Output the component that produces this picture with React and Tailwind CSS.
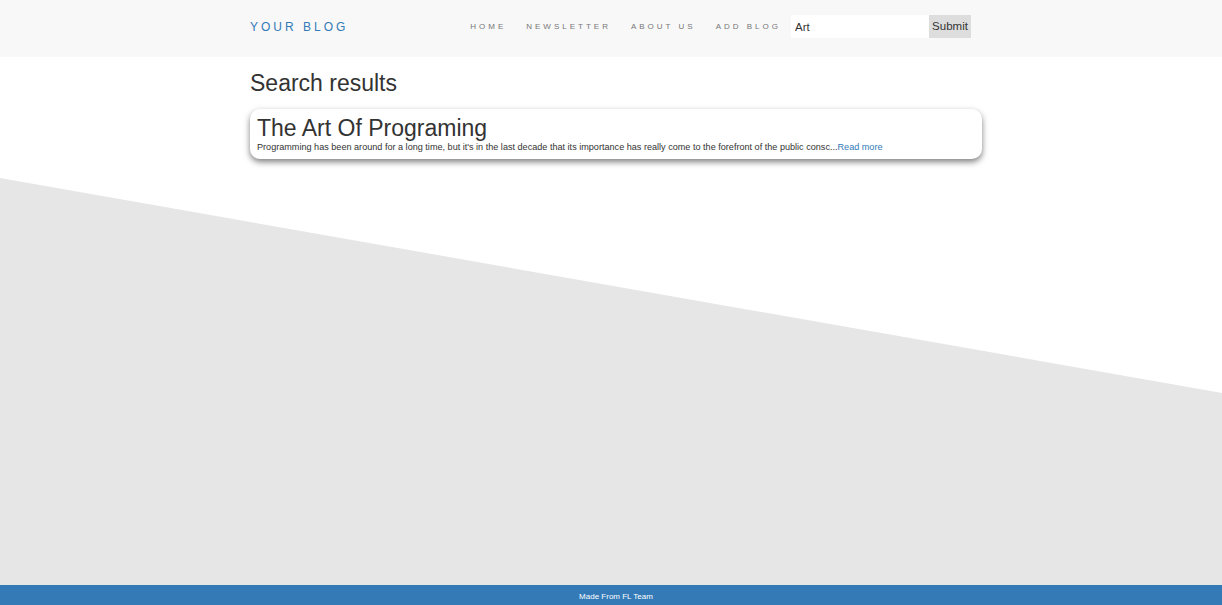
import { useState } from 'react';

const navItems = ['Home', 'Newsletter', 'About us', 'Add blog'];

const results = [
  {
    id: 1,
    title: 'The Art Of Programing',
    excerpt:
      "Programming has been around for a long time, but it's in the last decade that its importance has really come to the forefront of the public consc",
  },
];

export default function App() {
  const [query, setQuery] = useState('Art');

  return (
    <div className="relative min-h-screen flex flex-col bg-white font-['Liberation_Sans',Arial,sans-serif] text-[#333]">
      {/* diagonal backdrop */}
      <div className="absolute inset-0 bg-[#e6e6e6] [clip-path:polygon(0_178px,100%_393px,100%_100%,0_100%)]" />

      <header className="relative w-full bg-[#f8f8f8] h-[57px]">
        <div className="w-[722px] mx-auto h-full flex items-center pb-[4px] pr-[1px]">
          <a href="#" className="text-[12px] tracking-[3px] uppercase text-[#337ab7]">Your Blog</a>
          <nav className="ml-auto flex items-center">
            {navItems.map((item) => (
              <a key={item} href="#" className="px-[10px] text-[8px] tracking-[3px] uppercase text-[#777]">
                {item}
              </a>
            ))}
          </nav>
          <form className="flex items-center" onSubmit={(e) => e.preventDefault()}>
            <input
              value={query}
              onChange={(e) => setQuery(e.target.value)}
              className="w-[138px] h-[23px] bg-white px-[4px] text-[11.5px] text-[#333] outline-none"
            />
            <button className="h-[23px] w-[42px] bg-[#ddd] text-[11.5px] text-[#333]">Submit</button>
          </form>
        </div>
      </header>

      <main className="relative flex-1">
        <div className="w-[722px] mx-auto pt-[12px]">
          <h1 className="text-[23px] leading-[28px] text-[#333]">Search results</h1>
          <div className="mt-[12px] w-[732px]">
            {results.map((post) => (
              <div key={post.id} className="bg-white rounded-[10px] shadow-[0_3px_6px_rgba(0,0,0,0.5)] px-[7px] pt-[6px] pb-[6px]">
                <h2 className="text-[23px] leading-[26px]">{post.title}</h2>
                <p className="text-[9.1px] leading-[11px] mt-[1px]">
                  {post.excerpt}...<a href="#" className="text-[#337ab7]">Read more</a>
                </p>
              </div>
            ))}
          </div>
        </div>
      </main>

      <footer className="relative h-[20px] bg-[#337ab7] flex items-center justify-center pl-[10px] pt-[4px]">
        <span className="text-[8px] text-white">Made From FL Team</span>
      </footer>
    </div>
  );
}
